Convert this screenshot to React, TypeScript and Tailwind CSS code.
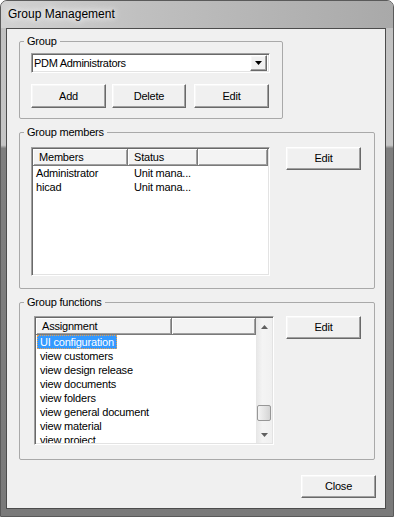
import React from 'react';

const raised =
  'border border-t-white border-l-white border-r-[#696969] border-b-[#696969] shadow-[inset_-1px_-1px_0_#a0a0a0,inset_1px_1px_0_#f7f7f7] bg-[#f0f0f0]';
const sunken =
  'border border-t-[#a0a0a0] border-l-[#a0a0a0] border-r-white border-b-white shadow-[inset_1px_1px_0_#696969,inset_-1px_-1px_0_#e3e3e3]';

function WinButton({ label, className = '' }: { label: string; className?: string }) {
  return (
    <div className={`flex items-center justify-center text-[11px] tracking-[-0.2px] ${raised} ${className}`}>
      {label}
    </div>
  );
}

function GroupBox({ title, className = '', children }: { title: string; className?: string; children: React.ReactNode }) {
  return (
    <fieldset className={`border border-[#a9a9a9] rounded-[2px] ${className}`}>
      <legend className="ml-[4px] px-[3px] text-[11px] leading-[13px] tracking-[-0.2px]">{title}</legend>
      {children}
    </fieldset>
  );
}

function HeaderCell({ label, className = '' }: { label: string; className?: string }) {
  return (
    <div
      className={`h-full border-r border-b border-[#7a7a7a] bg-[#f3f3f3] shadow-[inset_1px_1px_0_#fff,inset_-1px_-1px_0_#a0a0a0] pl-[6px] text-[11px] leading-[16px] tracking-[-0.2px] ${className}`}
    >
      {label}
    </div>
  );
}

function Arrow({ down = false, color = '#606060' }: { down?: boolean; color?: string }) {
  return (
    <svg width="7" height="4" viewBox="0 0 7 4">
      <path d={down ? 'M0 0 H7 L3.5 4 Z' : 'M0 4 H7 L3.5 0 Z'} fill={color} />
    </svg>
  );
}

const members = [
  ['Administrator', 'Unit mana...'],
  ['hicad', 'Unit mana...'],
];

const functions = [
  'UI configuration',
  'view customers',
  'view design release',
  'view documents',
  'view folders',
  'view general document',
  'view material',
  'view project',
];

export default function App() {
  return (
    <div className="w-[394px] h-[517px] font-['Liberation_Sans',Arial,sans-serif] text-black">
      <div className="flex h-full w-full flex-col overflow-hidden rounded-t-[7px] border border-[#5a5a5a] bg-[linear-gradient(to_bottom,#c0c0c0_0%,#c6c6c6_28%,#7f7f7f_28.6%,#7a7a7a_100%)]">
        {/* title bar */}
        <div className="flex h-[27px] items-center bg-[linear-gradient(to_right,#d2d2d2_0%,#c0c0c0_35%,#a9a9a9_100%)] pl-[7px] pb-[1px]">
          <span className="text-[12px] [text-shadow:0_0_6px_#fff,0_0_10px_#fff]">Group Management</span>
        </div>

        {/* client area */}
        <div className="mb-[7px] ml-[5px] mr-[7px] flex flex-1 flex-col border border-[#4c4c4c] bg-[#f0f0f0] pl-[12px] pt-[6px]">
          <GroupBox title="Group" className="w-[264px] pb-[10px]">
            <div className={`ml-[11px] mt-[5px] flex h-[20px] w-[239px] items-center bg-white pl-[2px] pr-[2px] ${sunken}`}>
              <span className="flex-1 text-[11px] tracking-[-0.3px]">PDM Administrators</span>
              <div className={`flex h-[16px] w-[17px] items-center justify-center ${raised}`}>
                <Arrow down color="#000" />
              </div>
            </div>
            <div className="mt-[11px] flex">
              <WinButton label="Add" className="ml-[11px] h-[24px] w-[75px]" />
              <WinButton label="Delete" className="ml-[6px] h-[24px] w-[74px]" />
              <WinButton label="Edit" className="ml-[8px] h-[24px] w-[75px]" />
            </div>
          </GroupBox>

          <GroupBox title="Group members" className="mt-[7px] w-[356px] pb-[12px]">
            <div className="mt-[8px] flex items-start">
              <div className={`ml-[11px] flex h-[129px] w-[239px] flex-col bg-white p-[1px] ${sunken}`}>
                <div className="flex h-[17px] shrink-0">
                  <HeaderCell label="Members" className="w-[95px]" />
                  <HeaderCell label="Status" className="w-[70px]" />
                  <HeaderCell label="" className="flex-1" />
                </div>
                {members.map(([name, status]) => (
                  <div key={name} className="flex h-[14px] text-[11px] leading-[14px] tracking-[-0.2px]">
                    <span className="w-[95px] pl-[3px]">{name}</span>
                    <span className="pl-[6px]">{status}</span>
                  </div>
                ))}
              </div>
              <WinButton label="Edit" className="ml-[16px] h-[23px] w-[75px]" />
            </div>
          </GroupBox>

          <GroupBox title="Group functions" className="mt-[7px] w-[356px] pb-[14px]">
            <div className="mt-[7px] flex items-start">
              <div className={`ml-[14px] flex h-[129px] w-[240px] bg-white p-[1px] ${sunken}`}>
                <div className="flex flex-1 flex-col overflow-hidden">
                  <div className="flex h-[17px] shrink-0">
                    <HeaderCell label="Assignment" className="w-[136px]" />
                    <HeaderCell label="" className="flex-1" />
                  </div>
                  {functions.map((f, i) => (
                    <div key={f} className="flex h-[14px] shrink-0 pl-[1px] text-[11px] leading-[14px] tracking-[-0.2px]">
                      {i === 0 ? (
                        <span className="border border-dotted border-[#e8a050] bg-[#3399ff] px-[2px] leading-[12px] text-white">{f}</span>
                      ) : (
                        <span className="pl-[3px]">{f}</span>
                      )}
                    </div>
                  ))}
                </div>
                {/* scrollbar */}
                <div className="flex w-[16px] flex-col bg-[linear-gradient(to_right,#e6e6e6,#f4f4f4_40%,#f0f0f0)]">
                  <div className="flex h-[17px] items-center justify-center">
                    <Arrow />
                  </div>
                  <div className="flex-1">
                    <div className="ml-[1px] mt-[70px] h-[16px] w-[14px] rounded-[2px] border border-[#979797] bg-[linear-gradient(to_right,#f4f4f4,#e2e2e2_60%,#d4d4d4)]" />
                  </div>
                  <div className="flex h-[16px] items-center justify-center">
                    <Arrow down />
                  </div>
                </div>
              </div>
              <WinButton label="Edit" className="ml-[12px] h-[23px] w-[75px]" />
            </div>
          </GroupBox>

          <WinButton label="Close" className="ml-[282px] mt-[15px] h-[23px] w-[75px]" />
        </div>
      </div>
    </div>
  );
}
